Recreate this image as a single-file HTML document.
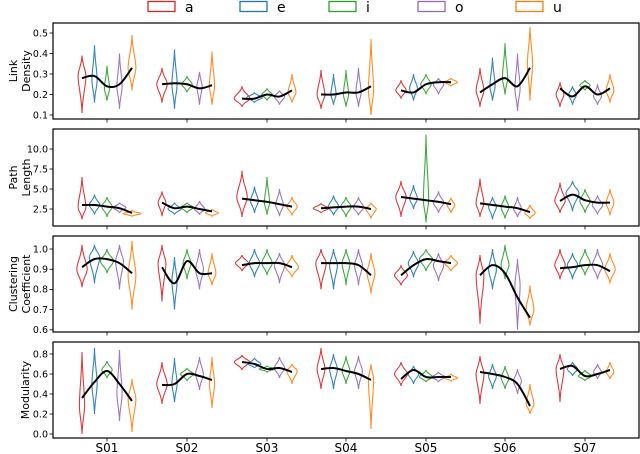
<!DOCTYPE html>
<html><head><meta charset="utf-8"><style>
html,body{margin:0;padding:0;background:#fff;width:640px;height:454px;overflow:hidden}
svg{display:block;font-family:"DejaVu Sans","Liberation Sans",sans-serif}
</style></head><body>
<svg id="s" width="640" height="454" viewBox="0 0 640 454" xmlns="http://www.w3.org/2000/svg"></svg>
<script>
var S=document.getElementById('s');var out='';
var cols=['#d62728','#1f77b4','#2ca02c','#9467bd','#ff7f0e'];
var L=53,R=639;
var gx=[107,187,267,346,426,505,585];var off=[-25,-12.5,0,12.5,25];
var panels=[
{t:23,b:119,f:function(v){return 115-(v-0.1)*205},ticks:[[0.1,'0.1'],[0.2,'0.2'],[0.3,'0.3'],[0.4,'0.4'],[0.5,'0.5']],lab:['Link','Density'],
d:[
[[.29,.11,.39,3],[.27,.16,.44,2],[.23,.17,.34,2],[.24,.13,.40,2],[.33,.22,.49,3],[.28,.29,.24,.25,.33]],
[[.25,.16,.33,4],[.25,.13,.42,2],[.25,.21,.29,4],[.24,.15,.31,2],[.24,.15,.41,2],[.25,.255,.25,.23,.245]],
[[.18,.14,.24,6],[.185,.16,.21,6],[.2,.17,.23,4],[.19,.15,.22,4],[.21,.16,.30,3],[.18,.18,.2,.19,.22]],
[[.2,.13,.32,3],[.2,.15,.30,2],[.2,.14,.32,2],[.21,.14,.33,2],[.22,.10,.47,2],[.2,.2,.21,.21,.24]],
[[.22,.18,.27,4],[.23,.17,.30,3],[.25,.2,.3,4],[.25,.2,.28,4],[.26,.24,.28,5],[.22,.21,.25,.26,.26]],
[[.22,.14,.33,3],[.24,.17,.38,2],[.28,.2,.45,2],[.23,.12,.40,2],[.35,.17,.53,2],[.21,.25,.28,.24,.33]],
[[.2,.14,.26,3],[.2,.15,.24,3],[.245,.22,.27,4],[.19,.15,.25,3],[.22,.16,.30,3],[.23,.19,.24,.2,.23]]]},
{t:129,b:226,f:function(v){return 209-(v-2.5)*8},ticks:[[2.5,'2.5'],[5,'5.0'],[7.5,'7.5'],[10,'10.0']],lab:['Path','Length'],
d:[
[[2.7,1.2,6.5,3],[3,1.8,4.3,4],[2.8,1.5,4,4],[2.7,2,3.3,5],[1.9,1.6,2.3,7],[3,3,2.8,2.6,2]],
[[3.3,1.6,4.7,3],[2.5,1.8,3.3,5],[2.7,2,3.3,5],[2.5,1.8,3.5,4],[2,1.6,2.5,5],[3.3,2.6,2.8,2.5,2.2]],
[[4,1.5,7.3,4],[3.5,2,5.3,3],[3.3,1.8,6.5,2],[3,1.6,5,3],[2.8,1.7,4,4],[3.8,3.6,3.4,3.1,2.8]],
[[2.6,2,3.2,6],[2.8,1.7,4.2,4],[2.8,1.5,4,4],[2.7,1.7,4,4],[2.5,1.3,3.3,4],[2.6,2.7,2.8,2.8,2.5]],
[[4,1.5,6,4],[3.8,2.5,5.5,3],[3.6,0.8,11.8,2],[3.3,2,4.7,4],[3,2,3.9,3],[4,3.8,3.6,3.4,3.1]],
[[3.2,1.5,6.3,3],[2.8,1.2,4,3],[2.7,1.3,4.2,3],[2.5,1.5,4,3],[2,1.3,3,4],[3.2,3,2.8,2.6,2.1]],
[[3.5,2,5.8,4],[4.5,2.2,6,5],[3.5,2,5,4],[3,1.8,4.2,4],[3.3,1.7,5,3],[3.5,4.3,3.6,3.3,3.3]]]},
{t:236,b:332,f:function(v){return 249-(v-1)*202},ticks:[[0.6,'0.6'],[0.7,'0.7'],[0.8,'0.8'],[0.9,'0.9'],[1.0,'1.0']],lab:['Clustering','Coefficient'],
d:[
[[.9,.81,1.02,4],[.96,.83,1.02,4],[.94,.88,1,5],[.94,.8,1.02,3],[.87,.7,1.04,3],[.91,.95,.95,.93,.88]],
[[.93,.74,1.02,3],[.84,.7,.96,2],[.93,.85,1,3],[.9,.8,1,3],[.88,.82,.98,3],[.91,.83,.94,.88,.88]],
[[.93,.89,.97,5],[.93,.86,1,4],[.93,.87,1,4],[.92,.83,.98,4],[.91,.86,.97,5],[.92,.93,.93,.93,.91]],
[[.93,.8,1,4],[.92,.8,1,3],[.93,.82,1,3],[.92,.82,1,3],[.88,.78,.98,3],[.93,.93,.93,.92,.87]],
[[.87,.82,.92,5],[.93,.86,.99,4],[.95,.89,1,5],[.92,.84,.98,4],[.93,.89,.97,5],[.87,.92,.95,.94,.93]],
[[.87,.63,.97,3],[.9,.8,1,3],[.92,.85,1.02,3],[.82,.6,.95,2],[.7,.62,.82,3],[.87,.92,.88,.76,.66]],
[[.92,.85,1,4],[.92,.85,.98,4],[.93,.87,1,4],[.92,.85,1,4],[.9,.83,.98,4],[.905,.91,.92,.92,.89]]]},
{t:342,b:438,f:function(v){return 434-v*100},ticks:[[0,'0.0'],[0.2,'0.2'],[0.4,'0.4'],[0.6,'0.6'],[0.8,'0.8']],lab:['Modularity'],
d:[
[[.28,0,.82,2],[.5,.2,.86,2],[.64,.56,.73,4],[.4,.13,.84,2],[.35,.02,.55,3],[.36,.52,.63,.5,.33]],
[[.5,.3,.72,4],[.5,.32,.76,2],[.6,.53,.66,5],[.6,.44,.77,3],[.5,.26,.77,2],[.49,.5,.6,.58,.54]],
[[.72,.64,.79,6],[.7,.66,.76,5],[.65,.62,.68,6],[.66,.56,.77,4],[.63,.5,.7,4],[.72,.7,.65,.66,.62]],
[[.65,.45,.86,3],[.65,.45,.8,3],[.63,.5,.78,3],[.63,.45,.78,3],[.55,.05,.7,2],[.65,.66,.63,.6,.54]],
[[.6,.48,.72,5],[.6,.5,.68,4],[.57,.52,.64,5],[.57,.52,.62,5],[.56,.53,.6,5],[.55,.64,.57,.57,.57]],
[[.6,.3,.78,3],[.58,.45,.7,3],[.56,.45,.68,3],[.53,.4,.65,3],[.3,.2,.5,3],[.62,.6,.57,.5,.28]],
[[.65,.32,.8,3],[.65,.58,.72,4],[.58,.53,.64,5],[.62,.55,.7,3],[.62,.55,.72,3],[.65,.68,.58,.6,.64]]]}
];
function violin(x,yc,yt,yb,w,c){
  w=w*1.3;
  var a=(yc-yt),b=(yb-yc);
  var p='M'+x+','+yt+' C'+(x+0.5)+','+(yt+a*0.5)+' '+(x+w)+','+(yc-a*0.3)+' '+(x+w)+','+yc+
  ' C'+(x+w)+','+(yc+b*0.3)+' '+(x+0.5)+','+(yb-b*0.5)+' '+x+','+yb+
  ' C'+(x-0.5)+','+(yb-b*0.5)+' '+(x-w)+','+(yc+b*0.3)+' '+(x-w)+','+yc+
  ' C'+(x-w)+','+(yc-a*0.3)+' '+(x-0.5)+','+(yt+a*0.5)+' '+x+','+yt+'Z';
  return '<path d="'+p+'" fill="none" stroke="'+c+'" stroke-width="1.1" stroke-opacity="0.9"/>';
}
function curve(pts){
  var s='M'+pts[0][0]+','+pts[0][1];
  for(var i=0;i<pts.length-1;i++){
    var p0=pts[i-1]||pts[i],p1=pts[i],p2=pts[i+1],p3=pts[i+2]||p2;
    s+=' C'+(p1[0]+(p2[0]-p0[0])/6)+','+(p1[1]+(p2[1]-p0[1])/6)+' '+(p2[0]-(p3[0]-p1[0])/6)+','+(p2[1]-(p3[1]-p1[1])/6)+' '+p2[0]+','+p2[1];
  }
  return '<path d="'+s+'" fill="none" stroke="#000" stroke-width="2"/>';
}
panels.forEach(function(P){
  out+='<rect x="'+L+'" y="'+P.t+'" width="'+(R-L)+'" height="'+(P.b-P.t)+'" fill="none" stroke="#000" stroke-width="1.2"/>';
  P.ticks.forEach(function(t){var y=P.f(t[0]);
    out+='<line x1="'+(L-3.5)+'" x2="'+L+'" y1="'+y+'" y2="'+y+'" stroke="#000" stroke-width="0.8"/>';
    out+='<text x="'+(L-5)+'" y="'+(y+3.3)+'" font-size="9.5" text-anchor="end">'+t[1]+'</text>';});
  gx.forEach(function(x){out+='<line x1="'+x+'" x2="'+x+'" y1="'+P.b+'" y2="'+(P.b+3.5)+'" stroke="#000" stroke-width="0.8"/>';});
  var cy=(P.t+P.b)/2;
  if(P.lab.length==2){
    out+='<text transform="translate(17,'+cy+') rotate(-90)" font-size="11" text-anchor="middle">'+P.lab[0]+'</text>';
    out+='<text transform="translate(30,'+cy+') rotate(-90)" font-size="11" text-anchor="middle">'+P.lab[1]+'</text>';
  } else out+='<text transform="translate(29,'+cy+') rotate(-90)" font-size="11" text-anchor="middle">'+P.lab[0]+'</text>';
  P.d.forEach(function(g,gi){
    for(var k=0;k<5;k++){var v=g[k];out+=violin(gx[gi]+off[k],P.f(v[0]),P.f(v[2]),P.f(v[1]),v[3],cols[k]);}
    var pts=[];for(var k=0;k<5;k++)pts.push([gx[gi]+off[k],P.f(g[5][k])]);
    out+=curve(pts);
  });
});
['S01','S02','S03','S04','S05','S06','S07'].forEach(function(t,i){out+='<text x="'+gx[i]+'" y="452" font-size="12" text-anchor="middle">'+t+'</text>';});
var lx=[148,240,329,418,516],lt=['a','e','i','o','u'];
lx.forEach(function(x,i){out+='<rect x="'+x+'" y="1.5" width="27" height="10" fill="none" stroke="'+cols[i]+'" stroke-width="1.3"/>';
  out+='<text x="'+(x+37)+'" y="12" font-size="14">'+lt[i]+'</text>';});
S.innerHTML=out;
</script>
</body></html>
